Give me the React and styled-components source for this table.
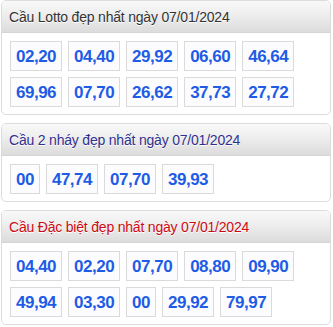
import React from 'react';
import styled, { createGlobalStyle } from 'styled-components';

const GlobalStyle = createGlobalStyle`
  body {
    margin: 0;
    background: #fff;
    font-family: Arial, "Liberation Sans", sans-serif;
  }
`;

const Page = styled.div`
  display: flex;
  flex-direction: column;
  gap: 8px;
  width: 330px;
  padding-left: 1px;
`;

const Panel = styled.div`
  border: 1px solid #dcdcdc;
  border-radius: 5px;
  overflow: hidden;
  background: #fff;
`;

const Header = styled.div`
  height: 31px;
  display: flex;
  align-items: center;
  padding-left: 7px;
  font-size: 14px;
  letter-spacing: -0.2px;
  color: ${props => props.color};
  text-shadow: 0 1px 0 #fff;
  background: linear-gradient(to bottom, #f9f9f9 0%, #ececec 50%, #dcdcdc 100%);
  border-bottom: 1px solid #d4d4d4;
`;

const Body = styled.div`
  display: flex;
  flex-wrap: wrap;
  gap: 6px;
  padding: 8px 8px 7px 8px;
`;

const Num = styled.div`
  height: 28px;
  line-height: 29px;
  padding: 0 5px;
  border: 1px solid #dadada;
  background: #fcfcfe;
  color: #1f5ce6;
  font-weight: bold;
  font-size: 17px;
  letter-spacing: -0.5px;
  text-align: center;
`;

const panels = [
  {
    title: 'Cầu Lotto đẹp nhất ngày 07/01/2024',
    color: '#333',
    nums: ['02,20', '04,40', '29,92', '06,60', '46,64', '69,96', '07,70', '26,62', '37,73', '27,72'],
  },
  {
    title: 'Cầu 2 nháy đẹp nhất ngày 07/01/2024',
    color: '#30308e',
    nums: ['00', '47,74', '07,70', '39,93'],
  },
  {
    title: 'Cầu Đặc biệt đẹp nhất ngày 07/01/2024',
    color: '#cc0a14',
    nums: ['04,40', '02,20', '07,70', '08,80', '09,90', '49,94', '03,30', '00', '29,92', '79,97'],
  },
];

export default function App() {
  return (
    <>
      <GlobalStyle />
      <Page>
        {panels.map(p => (
          <Panel key={p.title}>
            <Header color={p.color}>{p.title}</Header>
            <Body>
              {p.nums.map((n, i) => <Num key={i}>{n}</Num>)}
            </Body>
          </Panel>
        ))}
      </Page>
    </>
  );
}
